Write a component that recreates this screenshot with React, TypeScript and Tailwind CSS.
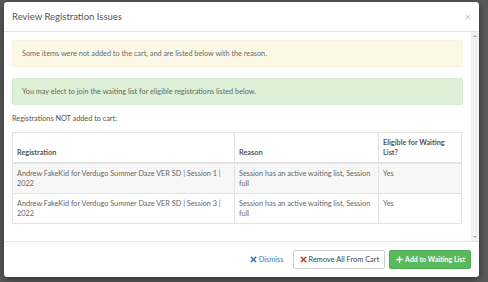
import { Plus, X } from 'lucide-react'

const rows = [
  {
    registration: 'Andrew FakeKid for Verdugo Summer Daze VER SD | Session 1 | 2022',
    reason: 'Session has an active waiting list, Session full',
    eligible: 'Yes',
  },
  {
    registration: 'Andrew FakeKid for Verdugo Summer Daze VER SD | Session 3 | 2022',
    reason: 'Session has an active waiting list, Session full',
    eligible: 'Yes',
  },
]

export default function App() {
  return (
    <div
      className="h-[282px] w-[488px] overflow-hidden bg-[#5a5a5a] pt-[2px] pl-[4px]"
      style={{ fontFamily: 'Lato, "Open Sans", Arial, sans-serif' }}
    >
      <div className="flex h-[275px] w-[475px] flex-col rounded-[3px] bg-white text-[#555] shadow-[0_2px_8px_rgba(0,0,0,0.5)]">
        {/* Header */}
        <div className="flex h-[30px] shrink-0 items-center justify-between border-b border-[#e5e5e5] pr-[8px] pl-[8px]">
          <span className="pt-[1px] text-[9.5px] text-[#555]">Review Registration Issues</span>
          <span className="text-[11px] leading-none text-[#c4c4c4]">×</span>
        </div>

        {/* Body */}
        <div className="flex min-h-0 flex-1">
          <div className="flex-1 px-[8px] pt-[8px] text-[7.3px] leading-[10px] text-[#666]">
            <div className="flex h-[27px] items-center rounded-[2px] border border-[#faf2dc] bg-[#fcf8e6] px-[9px] text-[#6b6b6b]">
              Some items were not added to the cart, and are listed below with the reason.
            </div>
            <div className="mt-[11px] flex h-[27px] items-center rounded-[2px] border border-[#d6eccd] bg-[#dff0d8] px-[9px] text-[#5e6a5a]">
              You may elect to join the waiting list for eligible registrations listed below.
            </div>
            <p className="mt-[9px] text-[#555]">Registrations NOT added to cart:</p>
            <table className="mt-[8px] w-[450px] border-collapse border border-[#e2e2e2] text-left">
              <thead>
                <tr className="h-[30px]">
                  <th className="w-[222px] border-r border-b-2 border-[#e2e2e2] px-[4px] pb-[4px] align-bottom font-bold text-[#555]">
                    Registration
                  </th>
                  <th className="w-[144px] border-r border-b-2 border-[#e2e2e2] px-[4px] pb-[4px] align-bottom font-bold text-[#555]">
                    Reason
                  </th>
                  <th className="border-b-2 border-[#e2e2e2] px-[4px] pb-[4px] align-bottom font-bold text-[#555]">
                    Eligible for Waiting List?
                  </th>
                </tr>
              </thead>
              <tbody>
                {rows.map((r, i) => (
                  <tr key={i} className={`h-[30px] ${i % 2 === 0 ? 'bg-[#f7f7f7]' : 'bg-white'}`}>
                    <td className="border-r border-b border-[#e2e2e2] px-[4px] pt-[5px] pb-[4px] align-top">{r.registration}</td>
                    <td className="border-r border-b border-[#e2e2e2] px-[4px] pt-[5px] pb-[4px] align-top">{r.reason}</td>
                    <td className="border-b border-[#e2e2e2] px-[4px] pt-[5px] pb-[4px] align-top">{r.eligible}</td>
                  </tr>
                ))}
              </tbody>
            </table>
          </div>

          {/* Scrollbar */}
          <div className="flex w-[8px] shrink-0 flex-col items-center justify-between bg-[#f1f1f1] py-[3px]">
            <div className="h-0 w-0 border-r-[2px] border-b-[2px] border-l-[2px] border-r-transparent border-b-[#a3a3a3] border-l-transparent" />
            <div className="h-0 w-0 border-t-[2px] border-r-[2px] border-l-[2px] border-t-[#a3a3a3] border-r-transparent border-l-transparent" />
          </div>
        </div>

        {/* Footer */}
        <div className="flex h-[36px] shrink-0 items-center justify-end gap-[4px] border-t border-[#e5e5e5] pr-[8px] text-[7.4px]">
          <button className="mr-[5px] flex items-center gap-[1px] text-[#3a7cc4]">
            <X size={9} strokeWidth={4} className="text-[#2f6fb3]" />
            Dismiss
          </button>
          <button className="flex h-[19px] items-center gap-[1px] rounded-[2px] border border-[#cfcfcf] bg-white px-[5px] text-[#444]">
            <X size={9} strokeWidth={4} className="text-[#d0312d]" />
            Remove All From Cart
          </button>
          <button className="flex h-[19px] items-center gap-[1px] rounded-[2px] border border-[#4cae4c] bg-[#5cb85c] px-[5px] text-[7px] font-bold text-white">
            <Plus size={9} strokeWidth={4} />
            Add to Waiting List
          </button>
        </div>
      </div>
    </div>
  )
}
